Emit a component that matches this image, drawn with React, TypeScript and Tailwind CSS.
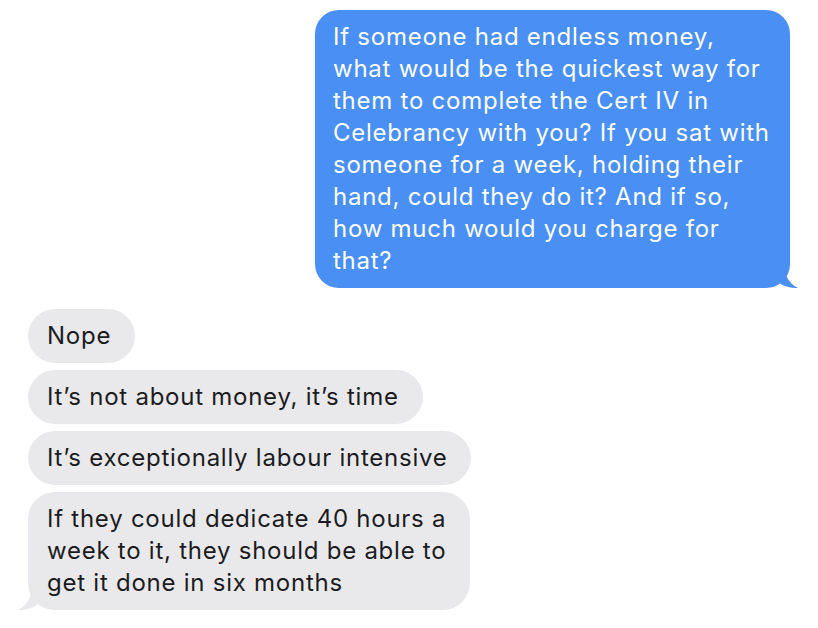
const sent = [
  "If someone had endless money,",
  "what would be the quickest way for",
  "them to complete the Cert IV in",
  "Celebrancy with you? If you sat with",
  "someone for a week, holding their",
  "hand, could they do it? And if so,",
  "how much would you charge for",
  "that?",
];

const received: string[][] = [
  ["Nope"],
  ["It’s not about money, it’s time"],
  ["It’s exceptionally labour intensive"],
  [
    "If they could dedicate 40 hours a",
    "week to it, they should be able to",
    "get it done in six months",
  ],
];

const Lines = ({ lines }: { lines: string[] }) => (
  <>
    {lines.map((l, i) => (
      <span key={i} className="block whitespace-nowrap">
        {l}
      </span>
    ))}
  </>
);

export default function App() {
  return (
    <div
      className="w-[818px] h-[628px] bg-white px-7 pt-[10px] flex flex-col text-[24px] leading-[32px] tracking-[0.75px]"
      style={{ fontFamily: "Inter, 'Noto Sans', sans-serif" }}
    >
      <div className="self-end relative">
        <div className="relative z-10 w-[475px] rounded-[24px] bg-[#4a8ff3] text-white px-[18px] py-[11px]">
          <Lines lines={sent} />
        </div>
        <svg
          className="absolute -right-[8px] bottom-0 z-0"
          width="30"
          height="26"
          viewBox="0 0 30 26"
        >
          <path
            d="M0 0 H16 C16 12 20 21 30 26 C22 26 15 24 10 20 C7 22 3 24 0 24 Z"
            fill="#4a8ff3"
          />
        </svg>
      </div>

      <div className="mt-[21px] flex flex-col items-start gap-[7px] text-[#1c1c1e]">
        {received.map((msg, i) => {
          const last = i === received.length - 1;
          return (
            <div key={i} className="relative">
              <div className="relative z-10 rounded-[27px] bg-[#e9e9eb] pl-[19px] pr-[24px] py-[11px]">
                <Lines lines={msg} />
              </div>
              {last && (
                <svg
                  className="absolute -left-[10px] bottom-0 z-0"
                  width="30"
                  height="26"
                  viewBox="0 0 30 26"
                >
                  <path
                    d="M30 0 H14 C14 12 10 21 0 26 C8 26 15 24 20 20 C23 22 27 24 30 24 Z"
                    fill="#e9e9eb"
                  />
                </svg>
              )}
            </div>
          );
        })}
      </div>
    </div>
  );
}
